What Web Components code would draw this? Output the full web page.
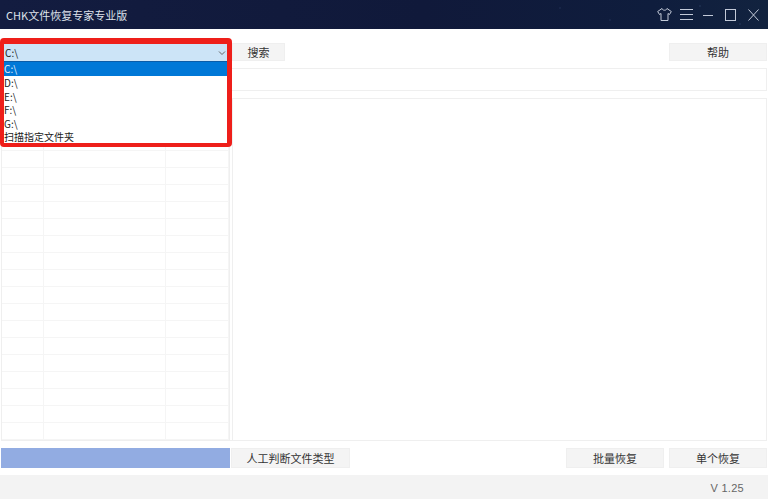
<!DOCTYPE html>
<html lang="zh">
<head>
<meta charset="utf-8">
<title>CHK文件恢复专家专业版</title>
<style>
    html, body { margin: 0; height: 100%; background: #fff; }
    body { font-family: "Noto Sans CJK SC", "Liberation Sans", sans-serif; color: #333; overflow: hidden; }
    chk-app { height: 500px; }
</style>
</head>
<body>
<chk-app>
    <chk-titlebar slot="title">CHK文件恢复专家专业版</chk-titlebar>
    <chk-button slot="search" style="width:53px">搜索</chk-button>
    <chk-button slot="help" style="width:98px">帮助</chk-button>
    <chk-drives slot="drives"></chk-drives>
    <chk-table slot="table"></chk-table>
    <chk-button slot="judge" style="width:119px">人工判断文件类型</chk-button>
    <chk-button slot="batch" style="width:98px">批量恢复</chk-button>
    <chk-button slot="single" style="width:98px">单个恢复</chk-button>
</chk-app>

<script>
class ChkButton extends HTMLElement {
    constructor() {
        super();
        this.attachShadow({ mode: 'open' });
        this.shadowRoot.innerHTML = `
            <style>
                :host {
                    display: flex;
                    align-items: center;
                    justify-content: center;
                    box-sizing: border-box;
                    height: 100%;
                    background: #f4f4f4;
                    border: 1px solid #efefef;
                    font-size: 11px;
                    color: #333;
                }
            </style>
            <slot></slot>
        `;
    }
}

class ChkTitlebar extends HTMLElement {
    constructor() {
        super();
        this.attachShadow({ mode: 'open' });
        this.shadowRoot.innerHTML = `
            <style>
                :host {
                    display: flex;
                    align-items: center;
                    height: 29px;
                    padding: 0 9px 0 6px;
                    box-sizing: border-box;
                    background:
                        radial-gradient(circle at 560px 8px, #2a3a63 0, transparent 1px),
                        radial-gradient(circle at 610px 20px, #2a3a63 0, transparent 1px),
                        radial-gradient(circle at 700px 6px, #33486f 0, transparent 1px),
                        radial-gradient(circle at 740px 24px, #33486f 0, transparent 1px),
                        linear-gradient(90deg, #131c40, #10193a 55%, #0f1d3d 85%, #12233f);
                    color: #dfe3ec;
                    font-size: 11px;
                }
                .name { flex: 1; }
                .icons { display: flex; align-items: center; }
                svg { display: block; fill: none; stroke: #c3cad8; stroke-width: 1; }
            </style>
            <span class="name"><slot></slot></span>
            <span class="icons">
                <svg width="15" height="13" viewBox="0 0 15 13"><path d="M5 .5 L.7 3.500 L2.500 6.500 L4 5.500 V12.500 H11 V5.500 L12.500 6.500 L14.300 3.500 L10 .5 C9.500 2.800 5.500 2.800 5 .5 Z"/></svg>
                <svg width="13" height="12" viewBox="0 0 13 12" style="margin-left:8px"><path d="M0 .5 H13 M0 5.500 H13 M0 10.500 H13"/></svg>
                <svg width="10" height="12" viewBox="0 0 10 12" style="margin-left:10px"><path d="M0 6.500 H10"/></svg>
                <svg width="11" height="12" viewBox="0 0 11 12" style="margin-left:12px"><rect x=".5" y=".5" width="10" height="11"/></svg>
                <svg width="11" height="12" viewBox="0 0 11 12" style="margin-left:12px"><path d="M.5 .5 L10.500 11.500 M10.500 .5 L.5 11.500"/></svg>
            </span>
        `;
    }
}

class ChkDrives extends HTMLElement {
    constructor() {
        super();
        this.attachShadow({ mode: 'open' });
        const drives = ['C:\\', 'D:\\', 'E:\\', 'F:\\', 'G:\\', '扫描指定文件夹'];
        this.shadowRoot.innerHTML = `
            <style>
                :host { display: block; position: relative; height: 17px; font-size: 10px; color: #222; }
                .combo {
                    display: flex;
                    align-items: center;
                    justify-content: space-between;
                    height: 17px;
                    box-sizing: border-box;
                    padding: 0 2px 0 3px;
                    background: #cce4f7;
                }
                .list {
                    position: absolute;
                    top: 17px;
                    left: 0;
                    right: 0;
                    height: 82px;
                    background: #fff;
                    border-top: 1px solid #0a5ca8;
                    box-sizing: border-box;
                    z-index: 2;
                }
                .item { height: 13.500px; line-height: 13.500px; padding-left: 2px; white-space: nowrap; }
                .item.active { background: #0078d7; color: #e6f0fa; height: 14px; line-height: 14px; }
                .ring {
                    position: absolute;
                    left: -2px;
                    right: -4px;
                    top: -6px;
                    height: 109px;
                    box-sizing: border-box;
                    border-style: solid;
                    border-color: #ee1f1a;
                    border-width: 6px 5px 4px 4px;
                    border-radius: 4px;
                    z-index: 3;
                    pointer-events: none;
                }
                svg { display: block; fill: none; stroke: #666; }
            </style>
            <div class="combo">
                <span>C:\\</span>
                <svg width="8" height="6" viewBox="0 0 8 6"><path d="M1 1.500 L4 4.500 L7 1.500"/></svg>
            </div>
            <div class="list">
                ${drives.map((d, i) => `<div class="item${i === 0 ? ' active' : ''}">${d}</div>`).join('')}
            </div>
            <div class="ring"></div>
        `;
    }
}

class ChkTable extends HTMLElement {
    constructor() {
        super();
        this.attachShadow({ mode: 'open' });
        // rows are empty, only the grid lines show
        const cells = '<i></i><i></i><i></i>'.repeat(21);
        this.shadowRoot.innerHTML = `
            <style>
                :host {
                    display: block;
                    height: 100%;
                    box-sizing: border-box;
                    padding-top: 1px;
                    border: 1px solid #efefef;
                    border-bottom: none;
                    overflow: hidden;
                    background: #fff;
                }
                .grid {
                    display: grid;
                    grid-template-columns: 42px 122px 1fr;
                    grid-auto-rows: 17px;
                }
                i { display: block; border-right: 1px solid #f5f5f5; border-bottom: 1px solid #f5f5f5; }
            </style>
            <div class="grid">${cells}</div>
        `;
    }
}

class ChkApp extends HTMLElement {
    constructor() {
        super();
        this.attachShadow({ mode: 'open' });
        this.shadowRoot.innerHTML = `
            <style>
                :host { display: flex; flex-direction: column; }
                .toolbar {
                    display: flex;
                    height: 18px;
                    margin: 14px 1px 0 2px;
                }
                .toolbar .left { width: 226px; margin-top: 1px; }
                .toolbar .search { margin-left: 4px; }
                .toolbar .help { margin-left: auto; }
                .path {
                    height: 23px;
                    margin: 7px 1px 0 2px;
                    border: 1px solid #efefef;
                    box-sizing: border-box;
                }
                .panels {
                    flex: 1;
                    display: flex;
                    gap: 2px;
                    margin: 7px 1px 0 1px;
                    min-height: 0;
                    border-bottom: 1px solid #efefef;
                }
                .panels .left { width: 229px; }
                .panels .right { flex: 1; border: 1px solid #efefef; border-bottom: none; }
                .actions {
                    display: flex;
                    height: 20px;
                    margin: 7px 1px 0 1px;
                }
                .progress { width: 229px; background: #92ace2; }
                .actions .judge { margin-left: 1px; }
                .actions .batch { margin-left: auto; }
                .actions .single { margin-left: 5px; }
                .status {
                    display: flex;
                    align-items: center;
                    justify-content: flex-end;
                    height: 24px;
                    padding: 1px 24px 0 0;
                    box-sizing: border-box;
                    margin: 7px 0 1px;
                    background: #f3f3f3;
                    font-size: 11px;
                    font-family: "Liberation Sans", sans-serif;
                    letter-spacing: .3px;
                    color: #666;
                }
            </style>
            <slot name="title"></slot>
            <div class="toolbar">
                <div class="left"><slot name="drives"></slot></div>
                <div class="search"><slot name="search"></slot></div>
                <div class="help"><slot name="help"></slot></div>
            </div>
            <div class="path"></div>
            <div class="panels">
                <div class="left"><slot name="table"></slot></div>
                <div class="right"></div>
            </div>
            <div class="actions">
                <div class="progress"></div>
                <div class="judge"><slot name="judge"></slot></div>
                <div class="batch"><slot name="batch"></slot></div>
                <div class="single"><slot name="single"></slot></div>
            </div>
            <div class="status">V 1.25</div>
        `;
    }
}

customElements.define('chk-button', ChkButton);
customElements.define('chk-titlebar', ChkTitlebar);
customElements.define('chk-drives', ChkDrives);
customElements.define('chk-table', ChkTable);
customElements.define('chk-app', ChkApp);
</script>
</body>
</html>
